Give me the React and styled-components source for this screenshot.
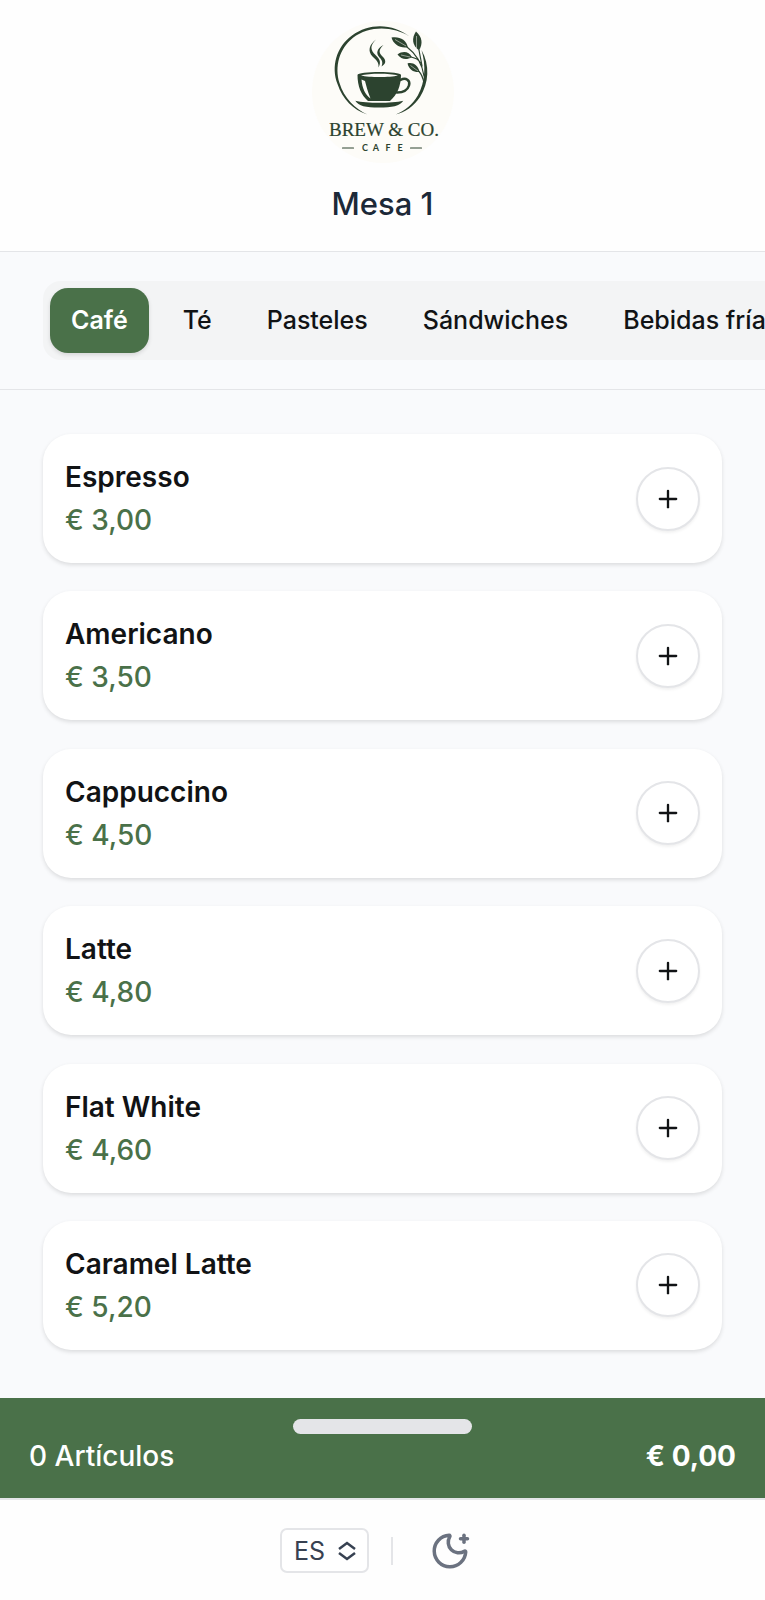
import React, { useState } from "react";
import styled, { createGlobalStyle, ThemeProvider } from "styled-components";
import { MoonStar, Plus } from "lucide-react";

const theme = {
  colors: {
    green: "#4a7149",
    logo: "#2c432f",
    bg_main: "#fefefe",
    bg_second: "#f9fafc",
    bg_tabs: "#f3f4f5",
    border: "#e4e5e8",
    text_title: "#1c2938",
    text_main: "#111315",
    text_second: "#374151",
    icon: "#6b7280",
  },
};

const categories = ["Café", "Té", "Pasteles", "Sándwiches", "Bebidas frías"];

const products = [
  { name: "Espresso", price: "€ 3,00" },
  { name: "Americano", price: "€ 3,50" },
  { name: "Cappuccino", price: "€ 4,50" },
  { name: "Latte", price: "€ 4,80" },
  { name: "Flat White", price: "€ 4,60" },
  { name: "Caramel Latte", price: "€ 5,20" },
];

const GlobalStyle = createGlobalStyle`
  * {
    box-sizing: border-box;
  }

  body {
    margin: 0;
    font-family: Inter, "Liberation Sans", sans-serif;
  }

  button,
  select {
    font-family: inherit;
  }
`;

const Page = styled.div`
  display: flex;
  flex-direction: column;
  min-height: 100vh;
  overflow-x: hidden;
  background-color: ${(props) => props.theme.colors.bg_second};
  color: ${(props) => props.theme.colors.text_main};
`;

const Header = styled.header`
  display: flex;
  flex-direction: column;
  align-items: center;
  gap: 18px;
  padding: 20px 0 25px;
  background-color: ${(props) => props.theme.colors.bg_main};
  border-bottom: 1px solid ${(props) => props.theme.colors.border};
`;

const Logo = styled.svg`
  display: block;
  width: 144px;
  height: 144px;
`;

const TableName = styled.h1`
  margin: 0;
  font-size: 31px;
  line-height: 44px;
  font-weight: 500;
  color: ${(props) => props.theme.colors.text_title};
`;

const TabsSection = styled.nav`
  padding: 29px 0 29px 43px;
  overflow-x: auto;
  scrollbar-width: none;
  border-bottom: 1px solid ${(props) => props.theme.colors.border};
`;

const TabList = styled.div`
  display: flex;
  gap: 13px;
  width: max-content;
  padding: 7px;
  border-radius: 18px;
  background-color: ${(props) => props.theme.colors.bg_tabs};
`;

const Tab = styled.button`
  padding: 0 21px;
  border: 0;
  border-radius: 18px;
  font-size: 25px;
  line-height: 65px;
  font-weight: ${(props) => (props.$active ? 600 : 500)};
  white-space: nowrap;
  cursor: pointer;
  color: ${(props) => (props.$active ? "#fff" : props.theme.colors.text_main)};
  background-color: ${(props) =>
    props.$active ? props.theme.colors.green : "transparent"};
  box-shadow: ${(props) =>
    props.$active ? "0 2px 4px rgba(0, 0, 0, 0.12)" : "none"};
`;

const ProductList = styled.main`
  display: flex;
  flex: 1;
  flex-direction: column;
  justify-content: space-between;
  gap: 28px;
  padding: 44px 43px 48px;
`;

const Card = styled.article`
  display: flex;
  align-items: center;
  justify-content: space-between;
  padding: 22px;
  border-radius: 28px;
  background-color: #fff;
  box-shadow: 0 2px 4px rgba(0, 0, 0, 0.12);
`;

const ProductName = styled.h2`
  margin: 0;
  font-size: 28px;
  line-height: 43px;
  font-weight: 600;
`;

const Price = styled.p`
  margin: 0;
  font-size: 28px;
  line-height: 42px;
  font-weight: 500;
  color: ${(props) => props.theme.colors.green};
`;

const AddButton = styled.button`
  display: flex;
  align-items: center;
  justify-content: center;
  width: 64px;
  height: 64px;
  padding: 0;
  border: 2px solid ${(props) => props.theme.colors.border};
  border-radius: 50%;
  color: ${(props) => props.theme.colors.text_main};
  background-color: #fff;
  box-shadow: 0 2px 3px rgba(0, 0, 0, 0.06);
  cursor: pointer;
`;

const CartBar = styled.section`
  display: flex;
  flex-direction: column;
  align-items: center;
  padding: 21px 29px 20px;
  color: #fff;
  background-color: ${(props) => props.theme.colors.green};
`;

const Handle = styled.div`
  width: 179px;
  height: 15px;
  border-radius: 8px;
  background-color: ${(props) => props.theme.colors.border};
`;

const CartRow = styled.div`
  display: flex;
  justify-content: space-between;
  align-self: stretch;
  font-size: 28px;
  line-height: 44px;
`;

const CartCount = styled.span`
  font-weight: 500;
`;

const CartTotal = styled.strong`
  font-weight: 700;
`;

const Footer = styled.footer`
  display: flex;
  align-items: center;
  justify-content: center;
  gap: 22px;
  padding: 28px 0 27px;
  background-color: ${(props) => props.theme.colors.bg_main};
  border-top: 2px solid ${(props) => props.theme.colors.border};
`;

const SelectWrap = styled.label`
  display: grid;
  align-items: center;
  width: 89px;
`;

const LanguageSelect = styled.select`
  grid-area: 1 / 1;
  width: 100%;
  height: 45px;
  padding: 0 12px;
  border: 2px solid ${(props) => props.theme.colors.border};
  border-radius: 7px;
  font-size: 25px;
  color: ${(props) => props.theme.colors.text_second};
  background-color: #fff;
  appearance: none;
`;

const SelectArrows = styled.svg`
  grid-area: 1 / 1;
  justify-self: end;
  width: 20px;
  height: 22px;
  margin-right: 12px;
  pointer-events: none;
  color: ${(props) => props.theme.colors.text_second};
`;

const Divider = styled.span`
  width: 2px;
  height: 28px;
  background-color: ${(props) => props.theme.colors.border};
`;

const ThemeButton = styled.button`
  display: flex;
  padding: 0 14px;
  border: 0;
  color: ${(props) => props.theme.colors.icon};
  background: none;
  cursor: pointer;
`;

const BrewLogo = () => (
  <Logo viewBox="0 0 144 144" role="img" aria-label="Brew & Co. Cafe">
    <circle cx="72" cy="72" r="71" fill="#fdfcf8" />
    <g fill={theme.colors.logo}>
      {/* ring, thinner towards its ends */}
      <path d="M98.500 16.500C83 4 59 2 41 15.500C25 27 20 47 26.500 64C31.500 79 42 90 56.500 94.500C44 89 33 78 28.500 63C23.500 47 28 29 42 17.800C58 5.500 82 6 98.500 16.500Z" />
      <path d="M110.500 30C119 45 118 63 109 77C103 86 94 92.500 84.500 94.500C94 91 101.500 84.500 106.800 75.500C114.500 62 115 45 110.500 30Z" />
      {/* steam */}
      <path d="M65 19.500C58.500 26 59.500 30 64.500 35C69.500 39.500 70 43 67.500 47.500C68 42.500 66 40.500 61.500 36.500C56.500 31 58 25 65 19.500Z" />
      <path d="M72.500 25C67 30 68 33 71.500 36.500C76 41 74.500 44 70.500 46.500C72 43 71.500 40.500 68.500 37.500C64.500 33 66 28.500 72.500 25Z" />
      {/* cup and saucer */}
      <path
        fillRule="evenodd"
        d="M46.500 55C46.500 51 90 51 90 55C90 66 86 75 79 81H57C50 75 46.500 66 46.500 55ZM50 55.500C58 57.500 79 57.500 87 55.500C79 53.200 58 53.200 50 55.500ZM50.500 59.500C51 68 54.500 75 59.500 78.500C56.500 71 55 65 54 61Z"
      />
      <path d="M44.300 80.700C56 83.500 80 83.500 92.300 80.700C89 86 81 87.500 68 87.500C55 87.500 47.500 86 44.300 80.700Z" />
      {/* leaves */}
      <path d="M80.500 17.500C88 16 95.500 19.500 96.800 27.200C89 28.500 82.500 24.500 80.500 17.500Z" />
      <path d="M105 11.500C100.500 18 101 25 108 30.500C112 24 111.500 17 105 11.500Z" />
      <path d="M86.500 34.500C92 30.500 98 31.500 100.800 37C95.500 40.500 90.500 39.500 86.500 34.500Z" />
      <path d="M96.500 43.500C101.500 42 107 45 108.500 52C103 52.500 98 50 96.500 43.500Z" />
    </g>
    <g fill="none" stroke={theme.colors.logo} strokeLinecap="round">
      <path d="M89.500 60C95 57 99.500 60.500 98 65.500C96.500 70.500 91 72.500 86 72.500" strokeWidth="2.500" />
      <path d="M96 27C104 33 111 43 113 56M108 30C109 36 110 40 111 46M100 37C105 38 108 40 109.500 43M108 51.500C110.500 54 112 58 113 63" strokeWidth="1.200" />
      <path d="M31.500 128H42.500M99.500 128H110.500" strokeWidth="1.200" />
    </g>
    <path
      d="M84 19.500L95 26M105.500 16V28M90 35L99 37M99.500 45.500L107 51"
      stroke="#fdfcf8"
      strokeWidth="0.500"
      fill="none"
    />
    <g fill={theme.colors.logo} textAnchor="middle">
      <text
        x="73"
        y="116"
        fontFamily="Liberation Serif, serif"
        fontSize="19"
        stroke={theme.colors.logo}
        strokeWidth="0.200"
      >
        BREW &amp; CO.
      </text>
      <text y="131" fontFamily="Lato, sans-serif" fontSize="9" fontWeight="700">
        <tspan x="54">C</tspan>
        <tspan x="65">A</tspan>
        <tspan x="77">F</tspan>
        <tspan x="89">E</tspan>
      </text>
    </g>
  </Logo>
);

const ProductCard = ({ name, price, onAdd }) => (
  <Card>
    <div>
      <ProductName>{name}</ProductName>
      <Price>{price}</Price>
    </div>
    <AddButton type="button" aria-label={name} onClick={onAdd}>
      <Plus size={28} />
    </AddButton>
  </Card>
);

const App = () => {
  const [active, setActive] = useState(categories[0]);
  const [count, setCount] = useState(0);

  return (
    <ThemeProvider theme={theme}>
      <GlobalStyle />
      <Page>
        <Header>
          <BrewLogo />
          <TableName>Mesa 1</TableName>
        </Header>
        <TabsSection>
          <TabList>
            {categories.map((category) => (
              <Tab
                key={category}
                type="button"
                $active={category === active}
                onClick={() => setActive(category)}
              >
                {category}
              </Tab>
            ))}
          </TabList>
        </TabsSection>
        <ProductList>
          {products.map((product) => (
            <ProductCard
              key={product.name}
              {...product}
              onAdd={() => setCount(count + 1)}
            />
          ))}
        </ProductList>
        <CartBar>
          <Handle />
          <CartRow>
            <CartCount>{count} Artículos</CartCount>
            <CartTotal>€ 0,00</CartTotal>
          </CartRow>
        </CartBar>
        <Footer>
          <SelectWrap>
            <LanguageSelect aria-label="Idioma" defaultValue="ES">
              <option>ES</option>
              <option>EN</option>
            </LanguageSelect>
            <SelectArrows
              viewBox="0 0 20 22"
              fill="none"
              stroke="currentColor"
              strokeWidth="2.500"
            >
              <path d="M2 9L10 3L18 9M2 13L10 19L18 13" />
            </SelectArrows>
          </SelectWrap>
          <Divider />
          <ThemeButton type="button" aria-label="Tema oscuro">
            <MoonStar size={42} />
          </ThemeButton>
        </Footer>
      </Page>
    </ThemeProvider>
  );
};

export default App;
